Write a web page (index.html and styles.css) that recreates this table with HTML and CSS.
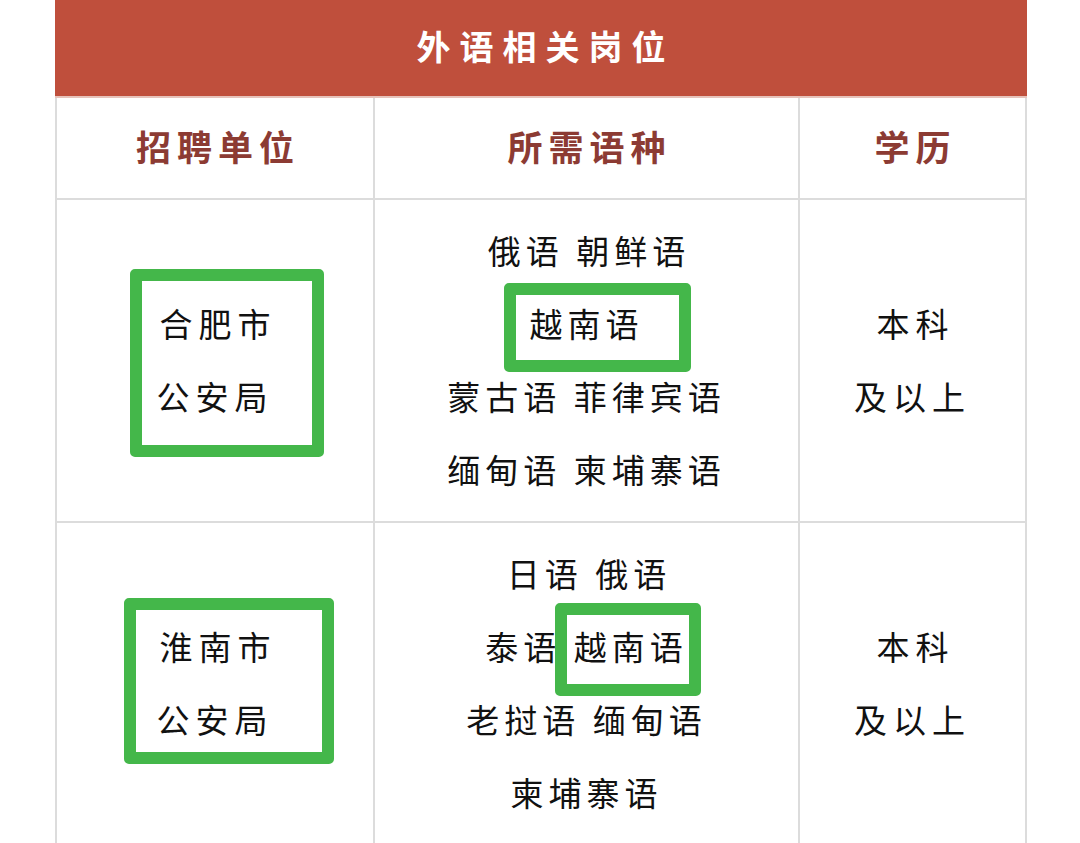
FILE: index.html
```html
<!DOCTYPE html>
<html lang="zh">
<head>
<meta charset="utf-8">
<title>外语相关岗位</title>
<link rel="stylesheet" href="styles.css">
</head>
<body>
<div class="page">
  <table class="jobs">
    <colgroup>
      <col class="c1">
      <col class="c2">
      <col class="c3">
    </colgroup>
    <thead>
      <tr class="title-row"><th colspan="3" class="title">外语相关岗位</th></tr>
      <tr class="head-row">
        <th>招聘单位</th>
        <th>所需语种</th>
        <th>学历</th>
      </tr>
    </thead>
    <tbody>
      <tr class="row">
        <td class="unit">合肥市<br>公安局</td>
        <td class="lang">俄语 朝鲜语<br>越南语<br>蒙古语 菲律宾语<br>缅甸语 柬埔寨语</td>
        <td class="edu">本科<br>及以上</td>
      </tr>
      <tr class="row">
        <td class="unit">淮南市<br>公安局</td>
        <td class="lang">日语 俄语<br>泰语 越南语<br>老挝语 缅甸语<br>柬埔寨语</td>
        <td class="edu">本科<br>及以上</td>
      </tr>
    </tbody>
  </table>
  <div class="mark mark-1"></div>
  <div class="mark mark-2"></div>
  <div class="mark mark-3"></div>
  <div class="mark mark-4"></div>
</div>
</body>
</html>
```
FILE: styles.css
```css
html, body {
  margin: 0;
  padding: 0;
  background: #ffffff;
}

.page {
  position: relative;
  width: 1080px;
  height: 843px;
  overflow: hidden;
  font-family: "Noto Sans CJK SC", "Noto Sans", sans-serif;
}

.jobs {
  margin-left: 55px;
  width: 970px;
  border-collapse: collapse;
  table-layout: fixed;
}

.c1 { width: 318px; }
.c2 { width: 425px; }
.c3 { width: 227px; }

.title {
  height: 96px;
  padding: 0 0 8px;
  box-sizing: border-box;
  background: #bf4f3c;
  color: #ffffff;
  font-size: 34px;
  font-weight: 700;
  letter-spacing: 9px;
  text-indent: 9px;
  text-align: center;
  border: 2px solid #bf4f3c;
  border-bottom-color: #e6c3bb;
}

.head-row th {
  height: 102px;
  padding: 0 0 6px;
  box-sizing: border-box;
  color: #8c3b33;
  font-size: 35px;
  font-weight: 700;
  letter-spacing: 6px;
  text-indent: 6px;
  text-align: center;
  border: 2px solid #dcdcdc;
}

.row td {
  padding: 14px 0 15px;
  border: 2px solid #dcdcdc;
  text-align: center;
  vertical-align: middle;
  color: #111111;
  font-size: 33px;
  line-height: 73px;
}

.unit, .edu {
  letter-spacing: 6px;
  text-indent: 6px;
}

.lang {
  letter-spacing: 5px;
  text-indent: 5px;
}

.mark {
  position: absolute;
  box-sizing: border-box;
  border: 12px solid #44b74a;
  border-radius: 5px;
}

.mark-1 { left: 130px; top: 269px; width: 194px; height: 188px; }
.mark-2 { left: 504px; top: 283px; width: 187px; height: 89px; }
.mark-3 { left: 124px; top: 598px; width: 210px; height: 166px; }
.mark-4 { left: 555px; top: 603px; width: 146px; height: 93px; }
```
